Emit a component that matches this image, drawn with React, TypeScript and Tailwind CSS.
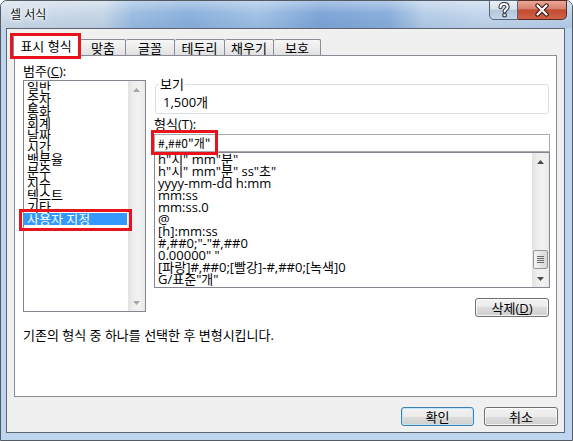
import React from "react";

function Arrow({ up, disabled }: { up?: boolean; disabled?: boolean }) {
  return (
    <svg width="7" height="4" viewBox="0 0 7 4">
      <path d={up ? "M0 4L3.5 0L7 4Z" : "M0 0L3.5 4L7 0Z"} fill={disabled ? "#a6a6a6" : "#4a4a4a"} />
    </svg>
  );
}

function ScrollBar({ disabled, thumb }: { disabled?: boolean; thumb?: boolean }) {
  return (
    <div className="w-[17px] shrink-0 flex flex-col bg-[linear-gradient(90deg,#e2e2e2_0%,#efefef_35%,#f1f1f1_70%,#e9e9e9_100%)]">
      <div className="h-[17px] flex items-center justify-center">
        <Arrow up disabled={disabled} />
      </div>
      <div className="flex-1 flex flex-col justify-end px-[1px]">
        {thumb && (
          <div className="h-[19px] mb-[1px] rounded-[2px] border border-[#979797] bg-[linear-gradient(90deg,#f4f4f4_0%,#e6e6e6_50%,#d8d8d8_100%)] flex flex-col items-center justify-center gap-[1px]">
            <div className="w-[7px] h-[1px] bg-[#6a6a6a]" />
            <div className="w-[7px] h-[1px] bg-[#6a6a6a]" />
            <div className="w-[7px] h-[1px] bg-[#6a6a6a]" />
            <div className="w-[7px] h-[1px] bg-[#6a6a6a]" />
          </div>
        )}
      </div>
      <div className="h-[17px] flex items-center justify-center">
        <Arrow disabled={disabled} />
      </div>
    </div>
  );
}

const categories = ["일반", "숫자", "통화", "회계", "날짜", "시간", "백분율", "분수", "지수", "텍스트", "기타"];

const formats = [
  'h"시" mm"분"',
  'h"시" mm"분" ss"초"',
  "yyyy-mm-dd h:mm",
  "mm:ss",
  "mm:ss.0",
  "@",
  "[h]:mm:ss",
  '#,##0;"-"#,##0',
  '0.00000" "',
  "[파랑]#,##0;[빨강]-#,##0;[녹색]0",
  'G/표준"개"',
];

export default function App() {
  return (
    <div className="w-[573px] h-[441px] flex flex-col border border-[#555b63] rounded-t-[7px] bg-[#bdd5ee] text-[13px] leading-[12px] text-black font-['Open_Sans','Noto_Sans_CJK_KR',sans-serif]">
      {/* Title bar */}
      <div className="h-[27px] shrink-0 flex justify-between rounded-t-[6px] bg-[linear-gradient(180deg,rgba(255,255,255,0.35)_0%,rgba(255,255,255,0)_45%,rgba(40,80,140,0.1)_100%),linear-gradient(90deg,#d3dfeb_0%,#c7d7e7_18%,#9ebfe3_23%,#8db2dd_33%,#a4c3e6_45%,#7fa7d8_56%,#8cb0dc_68%,#b8cfe8_74%,#c6d8ec_85%,#bcd2ea_100%)]">
        <div className="pl-[9px] pt-[8px] text-[12px] text-[#101010] [text-shadow:0_0_6px_#fff,0_0_3px_#fff,0_0_2px_#fff]">셀 서식</div>
        <div className="flex items-start -mt-px mr-[5px]">
          <div className="w-[29px] h-[20px] border border-[#56657a] rounded-bl-[5px] bg-[linear-gradient(180deg,#eaf1f8_0%,#d6e1ec_45%,#b6c7da_52%,#c5d5e6_100%)] flex items-center justify-center">
            <svg width="14" height="16" viewBox="0 0 14 16">
              <path d="M3.5 5.2C3.5 3 5 2 7 2C9.3 2 10.6 3.2 10.6 5C10.6 7.3 7.6 7.4 7.6 9.6" fill="none" stroke="#2d3846" strokeWidth="4.2" strokeLinecap="round" />
              <rect x="5.4" y="11.2" width="4.4" height="4" rx="1" fill="#2d3846" />
              <path d="M3.5 5.2C3.5 3 5 2 7 2C9.3 2 10.6 3.2 10.6 5C10.6 7.3 7.6 7.4 7.6 9.6" fill="none" stroke="#fff" strokeWidth="2" strokeLinecap="round" />
              <rect x="6.5" y="12.2" width="2.2" height="2" fill="#fff" />
            </svg>
          </div>
          <div className="w-[49px] h-[20px] border border-l-0 border-[#5a2a22] rounded-br-[5px] bg-[linear-gradient(180deg,#e9a898_0%,#d98270_42%,#c34a2f_50%,#cf6249_100%)] flex items-center justify-center">
            <svg width="16" height="14" viewBox="0 0 16 14">
              <path d="M3.5 2.5L12.5 11.5M12.5 2.5L3.5 11.5" stroke="#3a1a14" strokeWidth="4.4" strokeLinecap="round" />
              <path d="M3.5 2.5L12.5 11.5M12.5 2.5L3.5 11.5" stroke="#fff" strokeWidth="2.2" strokeLinecap="round" />
            </svg>
          </div>
        </div>
      </div>

      {/* Body with side frames */}
      <div className="flex h-[405px] shrink-0">
        <div className="w-[5px] shrink-0" />
        <div className="w-[559px] h-[405px] border border-[#5e6670] bg-[#f0f0f0] flex flex-col">
          {/* Tabs */}
          <div className="relative z-10 flex items-end h-[21px] ml-[6px] mt-[6px] -mb-px">
            <div className="relative w-[66px] h-[21px] border border-b-0 border-[#898c95] rounded-t-[2px] bg-white flex justify-center pt-[4px] whitespace-nowrap">
              <span>표시 형식</span>
              <div className="absolute -left-[4px] -top-[3px] -right-[3px] -bottom-[3px] border-[3px] border-[#e8141d] pointer-events-none" />
            </div>
            <div className="ml-[1px] mb-[1px] w-[46px] h-[16px] border border-b-0 border-[#898c95] rounded-t-[2px] bg-[linear-gradient(180deg,#f6f6f6_0%,#ececec_50%,#e0e0e0_100%)] flex items-center justify-center">맞춤</div>
            <div className="mb-[1px] w-[49px] h-[16px] border border-b-0 border-l-0 border-[#898c95] rounded-t-[2px] bg-[linear-gradient(180deg,#f6f6f6_0%,#ececec_50%,#e0e0e0_100%)] flex items-center justify-center">글꼴</div>
            <div className="mb-[1px] w-[50px] h-[16px] border border-b-0 border-l-0 border-[#898c95] rounded-t-[2px] bg-[linear-gradient(180deg,#f6f6f6_0%,#ececec_50%,#e0e0e0_100%)] flex items-center justify-center">테두리</div>
            <div className="mb-[1px] w-[49px] h-[16px] border border-b-0 border-l-0 border-[#898c95] rounded-t-[2px] bg-[linear-gradient(180deg,#f6f6f6_0%,#ececec_50%,#e0e0e0_100%)] flex items-center justify-center">채우기</div>
            <div className="mb-[1px] w-[47px] h-[16px] border border-b-0 border-l-0 border-[#898c95] rounded-t-[2px] bg-[linear-gradient(180deg,#f6f6f6_0%,#ececec_50%,#e0e0e0_100%)] flex items-center justify-center">보호</div>
          </div>

          {/* Tab panel */}
          <div className="ml-[7px] w-[543px] h-[342px] shrink-0 border border-[#898c95] bg-white flex flex-col">
            <div className="flex pl-[8px]">
              {/* Left column */}
              <div className="w-[123px] shrink-0 pt-[9px] flex flex-col">
                <div className="h-[12px] whitespace-nowrap">
                  범주(<span className="underline">C</span>):
                </div>
                <div className="mt-[3px] h-[232px] border border-[#828790] flex bg-white">
                  <div className="flex-1 flex flex-col">
                    {categories.map((c) => (
                      <div key={c} className="h-[12px] pl-[3px] whitespace-nowrap">
                        {c}
                      </div>
                    ))}
                    <div className="relative h-[12px] mr-[1px] pl-[3px] bg-[#3399ff] text-white whitespace-nowrap">
                      사용자 지정
                      <div className="absolute -left-[5px] -top-[4px] -right-[5px] -bottom-[6px] border-[3px] border-[#e8141d] pointer-events-none" />
                    </div>
                  </div>
                  <ScrollBar disabled />
                </div>
              </div>

              {/* Right column */}
              <div className="ml-[8px] w-[396px] shrink-0 pt-[22px] flex flex-col">
                <fieldset className="mx-[1px] h-[36px] border border-[#d5dfe5] rounded-[3px] p-0 m-0 min-w-0">
                  <legend className="ml-[3px] px-[1px] leading-[12px]">보기</legend>
                  <div className="ml-[7px] mt-[6px]">1,500개</div>
                </fieldset>
                <div className="mt-[4px] h-[12px] whitespace-nowrap">
                  형식(<span className="underline">T</span>):
                </div>
                <div className="relative mt-[4px] h-[18px] border border-[#a5a9b0] flex items-center pl-[3px] bg-white whitespace-nowrap font-['Noto_Sans_CJK_KR',sans-serif] text-[12px]">
                  #,##0"개"
                  <div className="absolute z-10 -left-[4px] -top-[5px] w-[67px] h-[25px] border-[3px] border-[#e8141d] pointer-events-none" />
                </div>
                <div className="h-[136px] border border-[#828790] flex bg-white">
                  <div className="flex-1 overflow-hidden flex flex-col pl-[3px]">
                    {formats.map((f) => (
                      <div key={f} className="h-[12px] shrink-0 whitespace-nowrap">
                        {f}
                      </div>
                    ))}
                  </div>
                  <ScrollBar thumb />
                </div>
                <div className="mt-[10px] flex justify-end mr-[1px]">
                  <div className="w-[74px] h-[19px] rounded-[3px] border border-[#707070] bg-[linear-gradient(180deg,#f2f2f2_0%,#ebebeb_50%,#dddddd_50%,#cfcfcf_100%)] shadow-[inset_0_0_0_1px_rgba(255,255,255,0.8)] flex items-center justify-center whitespace-nowrap">
                    삭제(<span className="underline">D</span>)
                  </div>
                </div>
              </div>
            </div>
            <div className="mt-[12px] pl-[8px] whitespace-nowrap">기존의 형식 중 하나를 선택한 후 변형시킵니다.</div>
          </div>

          {/* Bottom buttons */}
          <div className="mt-[10px] mr-[6px] flex justify-end gap-[10px]">
            <div className="w-[73px] h-[19px] rounded-[3px] border border-[#3c7fb1] bg-[linear-gradient(180deg,#f2f2f2_0%,#ebebeb_50%,#dddddd_50%,#cfcfcf_100%)] shadow-[inset_0_0_0_1px_#bde6fb] flex items-center justify-center">
              확인
            </div>
            <div className="w-[74px] h-[19px] rounded-[3px] border border-[#707070] bg-[linear-gradient(180deg,#f2f2f2_0%,#ebebeb_50%,#dddddd_50%,#cfcfcf_100%)] shadow-[inset_0_0_0_1px_rgba(255,255,255,0.8)] flex items-center justify-center">
              취소
            </div>
          </div>
        </div>
        <div className="w-[7px] shrink-0" />
      </div>
      <div className="h-[7px] shrink-0" />
    </div>
  );
}
